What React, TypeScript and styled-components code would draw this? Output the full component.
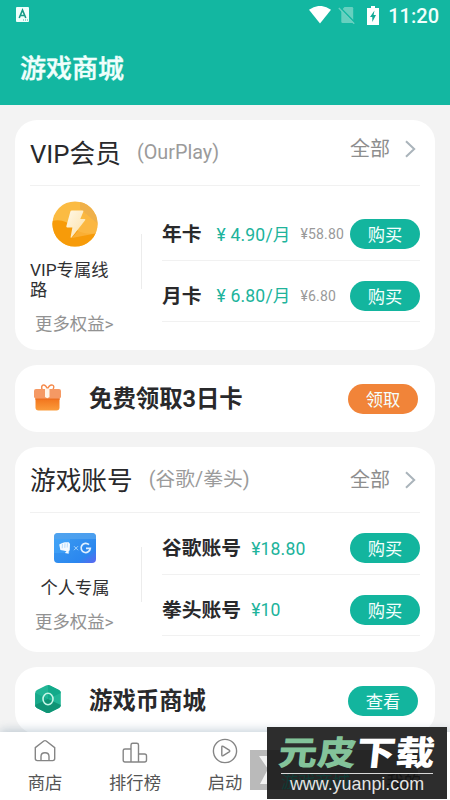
import React from 'react';
import styled, { createGlobalStyle } from 'styled-components';

const GlobalStyle = createGlobalStyle`
  * { box-sizing: border-box; }
  body {
    margin: 0;
    background: #f3f3f3;
    font-family: Roboto, "Noto Sans CJK SC", sans-serif;
    overflow: hidden;
  }
`;

const Screen = styled.div`
  width: 450px;
  height: 800px;
  display: flex;
  flex-direction: column;
  overflow: hidden;
  position: relative;
  background: #f3f3f3;
`;

const Header = styled.header`
  height: 105px;
  flex: none;
  background: #13b7a1;
  color: #f0fffc;
`;

const StatusBar = styled.div`
  height: 30px;
  display: flex;
  align-items: center;
  padding: 0 11px 0 15px;
  svg { display: block; flex: none; }
`;

const StatusIcons = styled.div`
  margin-left: auto;
  display: flex;
  align-items: center;
`;

const NoSimSlot = styled.span`
  margin: 0 11px 0 7px;
`;

const Clock = styled.span`
  font-size: 20px;
  font-weight: 500;
  line-height: 30px;
  margin: 1px 0 0 9px;
`;

const PageTitle = styled.h1`
  margin: 0;
  padding: 2px 20px 0;
  font-size: 26px;
  font-weight: 500;
  line-height: 75px;
  height: 75px;
  -webkit-text-stroke: 0.4px currentColor;
`;

const Content = styled.main`
  flex: 1;
  min-height: 0;
  overflow: hidden;
  padding: 15px 15px 0;
  display: flex;
  flex-direction: column;
  gap: 15px;
`;

const Card = styled.section<{ $height: number }>`
  flex: none;
  height: ${(p) => p.$height}px;
  padding: 0 15px;
  border-radius: 22px;
  background: #fff;
`;

const CardHead = styled.div`
  height: 66px;
  display: flex;
  align-items: center;
  border-bottom: 1.5px solid #f1f1f1;
`;

const CardTitle = styled.h2`
  margin: 0;
  padding-top: 2px;
  font-size: 25.7px;
  font-weight: 400;
  line-height: 40px;
  color: #29292b;
`;

const CardHint = styled.span`
  margin-left: 16px;
  font-size: 19.8px;
  line-height: 40px;
  color: #9b9b9b;
`;

const AllLink = styled.a<{ $lift: number }>`
  margin: 0 4px ${(p) => p.$lift}px auto;
  display: flex;
  align-items: center;
  gap: 14px;
  font-size: 20px;
  line-height: 40px;
  color: #8e8e8e;
`;

const CardBody = styled.div`
  display: flex;
`;

const Summary = styled.div<{ $top: number }>`
  width: 111px;
  flex: none;
  padding: ${(p) => p.$top}px 21px 0 0;
  display: flex;
  flex-direction: column;
  align-items: center;
  svg { display: block; }
`;

const SummaryText = styled.div<{ $top: number }>`
  width: 90px;
  margin-top: ${(p) => p.$top}px;
  font-size: 17.3px;
  line-height: 20px;
  color: #303032;
`;

const SummaryLabel = styled(SummaryText)`
  text-align: center;
`;

const MoreLink = styled.a<{ $top: number }>`
  width: 90px;
  margin-top: ${(p) => p.$top}px;
  padding-left: 5px;
  white-space: nowrap;
  font-size: 17.4px;
  line-height: 20px;
  color: #929292;
`;

const Separator = styled.div<{ $top: number }>`
  width: 1px;
  height: 55px;
  flex: none;
  margin-top: ${(p) => p.$top}px;
  background: #ececec;
`;

const Offers = styled.div<{ $top: number }>`
  flex: 1;
  margin-left: 20px;
  padding-top: ${(p) => p.$top}px;
`;

const OfferRow = styled.div`
  height: 61.6px;
  padding-top: 10px;
  display: flex;
  align-items: center;
  border-bottom: 1.5px solid #f1f1f1;
`;

const OfferName = styled.span`
  padding-top: 2px;
  font-size: 19.8px;
  font-weight: 700;
  line-height: 30px;
  color: #29292b;
`;

const Price = styled.span<{ $gap: number }>`
  margin-left: ${(p) => p.$gap}px;
  padding-top: 1px;
  font-size: 17.6px;
  line-height: 30px;
  letter-spacing: 0.15px;
  white-space: pre;
  color: #20b39b;
`;

const OldPrice = styled.span`
  margin-left: 10px;
  font-size: 14px;
  line-height: 30px;
  letter-spacing: 0.15px;
  color: #999;
`;

const Pill = styled.button<{ $tone?: string }>`
  width: 70px;
  height: 30px;
  flex: none;
  margin: 0 0 0 auto;
  padding: 1px 0 0;
  border: 0;
  border-radius: 15px;
  background: ${(p) => p.$tone ?? '#13b59e'};
  color: #f4fffd;
  font: 400 17.3px/30px Roboto, "Noto Sans CJK SC", sans-serif;
`;

const Banner = styled(Card)`
  display: flex;
  align-items: center;
  padding: 0 17px 0 18px;
  svg { display: block; flex: none; margin-bottom: 3px; }
`;

const BannerTitle = styled.h2`
  margin: 0 0 0 26px;
  font-size: 23.4px;
  font-weight: 700;
  line-height: 36px;
  color: #29292b;
`;

const NavBar = styled.nav`
  flex: none;
  height: 68px;
  display: grid;
  grid-template-columns: repeat(5, 90px);
  background: #fff;
  box-shadow: 0 -2px 9px rgba(70, 105, 135, 0.3);
`;

const NavItem = styled.a`
  display: flex;
  flex-direction: column;
  align-items: center;
  padding-top: 6px;
  font-size: 17.3px;
  line-height: 24px;
  color: #555;
  svg { display: block; margin-bottom: 7px; }
`;

const GhostMark = styled.div`
  position: absolute;
  left: 250px;
  top: 750px;
  width: 168px;
  height: 40px;
  background: #bababa;
  svg { display: block; }
`;

const Watermark = styled.div`
  position: absolute;
  left: 267px;
  top: 727px;
  width: 180px;
  height: 72px;
  display: flex;
  flex-direction: column;
  align-items: center;
  background: linear-gradient(#262626, #262626) 0 23px / 151px 40px no-repeat #2d2d2d;
  color: #fff;
`;

const CoveredLabels = styled.div`
  position: absolute;
  left: 14px;
  top: 43px;
  width: 152px;
  display: flex;
  justify-content: space-between;
  padding-right: 12px;
  font-size: 17.3px;
  line-height: 24px;
  color: #151515;
`;

const CoveredActive = styled.span`
  color: #103a35;
`;

const WatermarkName = styled.div`
  height: 46px;
  flex: none;
  display: flex;
  justify-content: center;
  font-size: 39px;
  font-weight: 900;
  line-height: 48px;
  font-family: "Noto Sans CJK SC", sans-serif;
  transform: skewX(-6deg) scaleY(0.86);
  position: relative;
`;

const Tint = styled.span`
  color: #83c39a;
`;

const WatermarkUrl = styled.div`
  width: 152px;
  border-top: 1px solid #d8d8d8;
  text-align: center;
  font-family: "Liberation Sans", sans-serif;
  font-size: 17.9px;
  line-height: 21px;
  color: #e4e4e4;
  position: relative;
`;

const Chevron = () => (
  <svg width="12" height="20" viewBox="0 0 12 20" fill="none" stroke="#aab4bb" strokeWidth="2">
    <path d="M2 2.2 10.2 10 2 17.8" />
  </svg>
);

const Bolt = () => (
  <svg width="46" height="46" viewBox="0 0 46 46">
    <defs>
      <linearGradient id="boltFill" x1="0" y1="0" x2="1" y2="1">
        <stop offset="0" stopColor="#fff8e6" />
        <stop offset="1" stopColor="#fce0a8" />
      </linearGradient>
      <clipPath id="coin"><circle cx="23" cy="23" r="22.6" /></clipPath>
    </defs>
    <g clipPath="url(#coin)">
      <path fill="#fbbb42" d="M0 0h46v46H0z" />
      <path fill="#efb04a" d="M28 0h18v23L28 8z" />
      <path fill="#f79b09" d="M0 20q12-3 21 6t25 6v14H0z" />
      <path fill="#fbb643" d="m28 9 18 14v9L20 37l14-17z" opacity=".75" />
    </g>
    <path fill="url(#boltFill)" d="M20 9.5h10.5q1.3 0 .8 1.3L28.3 18h4.2q1.5 0 .6 1.3L19.8 36.3q-1.5 1.3-1.1-.7l1.7-9.2h-5.2q-1.3 0-.8-1.3l4-14.5q.4-1.1 1.6-1.1z" />
  </svg>
);

const AccountCard = () => (
  <svg width="42" height="30" viewBox="0 0 42 30">
    <defs>
      <linearGradient id="cardFill" x1="0" y1="0" x2="1" y2="1">
        <stop offset="0" stopColor="#3d9df0" />
        <stop offset=".75" stopColor="#2b87ef" />
        <stop offset="1" stopColor="#5d65f0" />
      </linearGradient>
    </defs>
    <rect width="42" height="30" rx="4" fill="url(#cardFill)" />
    <path d="M4 0h34q4 0 4 4v2H0V4q0-4 4-4z" fill="#57a5ee" opacity=".7" />
    <path d="M0 6h16v14H0z" fill="#4bafff" opacity=".4" />
    <path fill="#f4faff" d="m5.2 11.5 3-1.5 2.6-.8 4 .1 1.2 1.6-.3 6.4-1 1v2.4l-3.8-.6 1.6-1.8-3.3-.7-2.8-.7z" />
    <path d="m8.5 10.8-.3 4.5M11 10.3l-.2 4.6M13.4 10.3l-.2 4.2" stroke="#79bdf6" strokeWidth=".5" />
    <path d="m20 13.2 4 4m0-4-4 4" stroke="#b2dafb" strokeWidth=".9" />
    <path d="M35 11.7a4.6 4.6 0 1 0 1.3 3.7H32" fill="none" stroke="#dff0ff" strokeWidth="1.7" />
  </svg>
);

const Gift = () => (
  <svg width="30" height="30" viewBox="0 0 30 30">
    <defs>
      <linearGradient id="giftFill" x1="0" y1="0" x2="0" y2="1">
        <stop offset="0" stopColor="#f06b16" />
        <stop offset="1" stopColor="#fb9c3b" />
      </linearGradient>
    </defs>
    <path d="M14.5 7.5Q13 2.6 9.8 3.1 8 3.8 9 7.5M14.5 7.5Q16 2.6 19.5 3.1 21.8 3.9 20 7.5" fill="none" stroke="#f58a4b" strokeWidth="1.4" />
    <rect x="2.5" y="14" width="24" height="14.4" rx="3" fill="url(#giftFill)" />
    <path d="M2.5 14h24v4h-24z" fill="#ee7020" />
    <rect x="1" y="7" width="27" height="9.5" rx="2" fill="#f59964" />
    <path d="M12 6.5h4.5V15l-2.2 1.2L12 15z" fill="#fff4e8" />
  </svg>
);

const Gem = () => (
  <svg width="30" height="30" viewBox="0 0 30 30">
    <path d="M13 1.6q2-1 4 0l9 4.5q1.8 1 1.8 3v12q0 2-1.8 3l-9 4.5q-2 1-4 0l-9-4.5q-1.8-1-1.8-3v-12q0-2 1.8-3z" fill="#22b696" />
    <path d="M15 1q1 0 2 .6l9 4.5q1.8 1 1.8 3L15 15z" fill="#13aa8a" />
    <path d="m2.2 9 12.8 6v14q-1 0-2-.4l-9-4.5q-1.8-1-1.8-3z" fill="#18a98a" />
    <path d="M2.2 21 15 15l12.8 6q0 2-1.8 3l-9 4.5q-2 1-4 0L4 24q-1.8-1-1.8-3z" fill="#109475" />
    <ellipse cx="15" cy="15" rx="5" ry="5.7" fill="none" stroke="#c6f5e6" strokeWidth="1.6" />
  </svg>
);

const AppBadge = () => (
  <svg width="14" height="16" viewBox="0 0 14 16">
    <rect x="1" y="0" width="13" height="15" rx="1" fill="#f0fffc" />
    <path d="m4.2 11 3.3-8 3.3 8M5.3 8.5h4.4" fill="none" stroke="#159a86" strokeWidth="1.6" />
    <path d="M8 13h5" stroke="#41b9a5" strokeDasharray="1 1" />
  </svg>
);

const Wifi = () => (
  <svg width="22" height="18" viewBox="0 0 22 18">
    <path d="M0 3.8Q11-4 22 3.8L11 17.6z" fill="#fff" />
  </svg>
);

const NoSim = () => (
  <svg width="18" height="18" viewBox="0 0 18 18">
    <path d="M6.5 1H14q1.2 0 1.2 1.2V17H4.5q-1.2 0-1.2-1.2V4.4z" fill="#66d0bf" />
    <path d="m1.6 1 15 15.4" stroke="#13b7a1" strokeWidth="1.6" />
    <path d="m.8 2 15.4 15.8" stroke="#6ad0c1" strokeWidth="1.3" />
  </svg>
);

const Battery = () => (
  <svg width="12" height="19" viewBox="0 0 12 19">
    <path d="M4 0h4v2h4v17H0V2h4z" fill="#fff" />
    <path d="M7.5 4.5 3 11h2.3v5L9 9H6.6z" fill="#13a996" />
  </svg>
);

const StoreIcon = () => (
  <svg width="26" height="26" viewBox="0 0 26 26" fill="none" stroke="#858585" strokeWidth="1.4">
    <path d="M3.3 9.6 11.8 3q1.2-.8 2.4 0l8.5 6.6v11q0 2-2 2H5.3q-2 0-2-2z" />
    <path d="M9 22.4v-4q0-3.6 4-3.6t4 3.6v4" />
  </svg>
);

const RankIcon = () => (
  <svg width="26" height="26" viewBox="0 0 26 26" fill="none" stroke="#858585" strokeWidth="1.4">
    <path d="M9 24H3q-1.8 0-1.8-1.8V12.6Q1.2 11 3 11h6M9 24V7q0-1.7 1.7-1.7h4Q16.5 5.3 16.5 7v17zm7.5 0h6q2 0 2-2v-4q0-2-2-2h-6" />
  </svg>
);

const PlayIcon = () => (
  <svg width="26" height="26" viewBox="0 0 26 26" fill="none" stroke="#858585" strokeWidth="1.4">
    <circle cx="13" cy="13" r="11.6" />
    <path d="M9.8 9.2q0-1.6 1.4-.8l6 3.8q1.2.8 0 1.6l-6 3.8q-1.4.8-1.4-.8z" />
  </svg>
);

const GhostLogo = () => (
  <svg width="40" height="40" viewBox="0 0 40 40">
    <path d="M9 6h9l9 12-9 16h-8l8-15z" fill="#f3f3f3" />
  </svg>
);

type Offer = { name: string; price: string; old?: string; gap: number };

const vipOffers: Offer[] = [
  { name: '年卡', price: '¥ 4.90/月', old: '¥58.80', gap: 15 },
  { name: '月卡', price: '¥ 6.80/月', old: '¥6.80', gap: 15 },
];

const accountOffers: Offer[] = [
  { name: '谷歌账号', price: '¥18.80', gap: 10 },
  { name: '拳头账号', price: '¥10', gap: 10 },
];

const OfferList = ({ offers, top }: { offers: Offer[]; top: number }) => (
  <Offers $top={top}>
    {offers.map((o) => (
      <OfferRow key={o.name}>
        <OfferName>{o.name}</OfferName>
        <Price $gap={o.gap}>{o.price}</Price>
        {o.old && <OldPrice>{o.old}</OldPrice>}
        <Pill>购买</Pill>
      </OfferRow>
    ))}
  </Offers>
);

export default function App() {
  return (
    <>
      <GlobalStyle />
      <Screen>
        <Header>
          <StatusBar>
            <AppBadge />
            <StatusIcons>
              <Wifi />
              <NoSimSlot><NoSim /></NoSimSlot>
              <Battery />
              <Clock>11:20</Clock>
            </StatusIcons>
          </StatusBar>
          <PageTitle>游戏商城</PageTitle>
        </Header>
        <Content>
          <Card $height={230}>
            <CardHead>
              <CardTitle>VIP会员</CardTitle>
              <CardHint>(OurPlay)</CardHint>
              <AllLink $lift={7}>全部<Chevron /></AllLink>
            </CardHead>
            <CardBody>
              <Summary $top={15}>
                <Bolt />
                <SummaryText $top={13}>VIP专属线路</SummaryText>
                <MoreLink $top={14}>更多权益&gt;</MoreLink>
              </Summary>
              <Separator $top={48} />
              <OfferList offers={vipOffers} top={13} />
            </CardBody>
          </Card>
          <Banner $height={67}>
            <Gift />
            <BannerTitle>免费领取3日卡</BannerTitle>
            <Pill $tone="#f18439">领取</Pill>
          </Banner>
          <Card $height={205}>
            <CardHead>
              <CardTitle>游戏账号</CardTitle>
              <CardHint>(谷歌/拳头)</CardHint>
              <AllLink $lift={0}>全部<Chevron /></AllLink>
            </CardHead>
            <CardBody>
              <Summary $top={20}>
                <AccountCard />
                <SummaryLabel $top={15}>个人专属</SummaryLabel>
                <MoreLink $top={14}>更多权益&gt;</MoreLink>
              </Summary>
              <Separator $top={34} />
              <OfferList offers={accountOffers} top={0} />
            </CardBody>
          </Card>
          <Banner $height={67}>
            <Gem />
            <BannerTitle>游戏币商城</BannerTitle>
            <Pill>查看</Pill>
          </Banner>
        </Content>
        <NavBar>
          <NavItem><StoreIcon />商店</NavItem>
          <NavItem><RankIcon />排行榜</NavItem>
          <NavItem><PlayIcon />启动</NavItem>
        </NavBar>
        <GhostMark><GhostLogo /></GhostMark>
        <Watermark>
          <CoveredLabels>
            <CoveredActive>游戏商城</CoveredActive>
            <span>我的</span>
          </CoveredLabels>
          <WatermarkName><Tint>元皮</Tint>下载</WatermarkName>
          <WatermarkUrl>www.yuanpi.com</WatermarkUrl>
        </Watermark>
      </Screen>
    </>
  );
}
